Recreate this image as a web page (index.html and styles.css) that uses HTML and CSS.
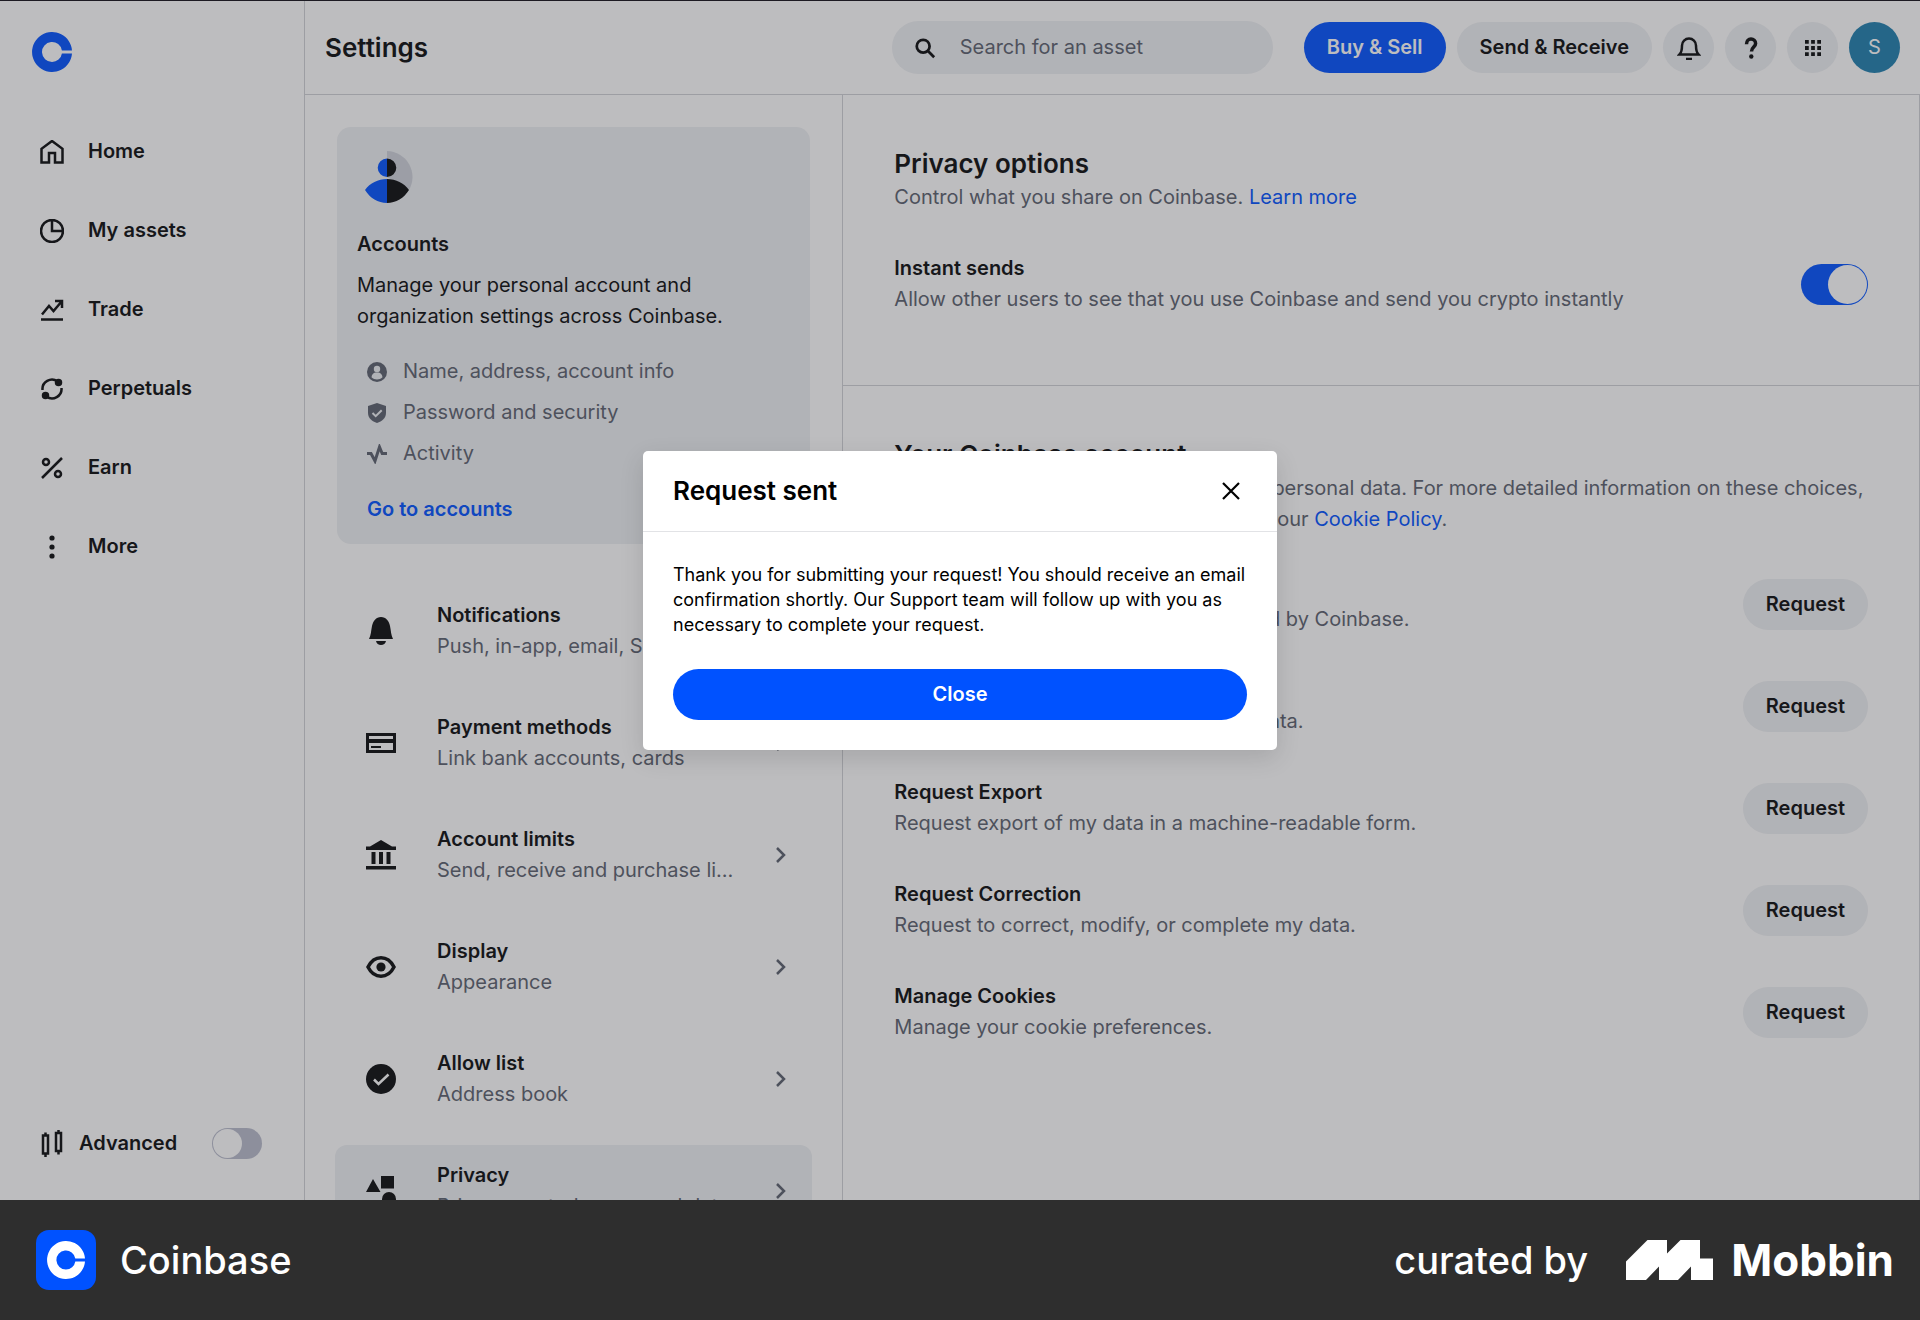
FILE: index.html
```html
<!DOCTYPE html>
<html lang="en">
<head>
<meta charset="utf-8">
<title>Settings</title>
<link rel="stylesheet" href="styles.css">
</head>
<body>
<div class="app">
  <nav class="sidebar" aria-label="Main">
    <a class="logo" href="#" aria-label="Coinbase"><svg viewBox="0 0 40 40" width="40" height="40"><path fill="#0052ff" d="M20 30a10 10 0 1 1 9.900-11.500H40A20 20 0 1 0 40 21.500H29.900A10 10 0 0 1 20 30z"/></svg></a>
    <ul class="nav">
      <li><a href="#"><svg class="ico" viewBox="0 0 24 24"><path d="M1.500 22.500V8.800L12 1l10.500 7.800v13.700H15V13H9v9.500z"/></svg>Home</a></li>
      <li><a href="#"><svg class="ico" viewBox="0 0 24 24"><circle cx="12" cy="12" r="11"/><path d="M12 1v11h11"/></svg>My assets</a></li>
      <li><a href="#"><svg class="ico" viewBox="0 0 24 24"><path d="M1 21.500h22M2 16.500l7-8.500 4.500 5L22 3M15 3h7v7"/></svg>Trade</a></li>
      <li><a href="#"><svg class="ico" viewBox="0 0 24 24"><path d="M2.500 13a9.500 9.500 0 0 1 15-8.600M21.500 11a9.500 9.500 0 0 1-15 8.600"/><circle cx="18.500" cy="5.500" r="2.500" fill="currentColor"/><circle cx="5.500" cy="18.500" r="2.500" fill="currentColor"/></svg>Perpetuals</a></li>
      <li><a href="#"><svg class="ico" viewBox="0 0 24 24"><circle cx="6" cy="6" r="3"/><circle cx="18" cy="18" r="3"/><path d="M22 2 2 22"/></svg>Earn</a></li>
      <li><a href="#"><svg class="ico" viewBox="0 0 24 24"><g fill="currentColor" stroke="none"><circle cx="12" cy="3" r="2.600"/><circle cx="12" cy="12" r="2.600"/><circle cx="12" cy="21" r="2.600"/></g></svg>More</a></li>
    </ul>
    <label class="advanced"><svg class="ico candles" viewBox="0 0 24 28"><path d="M3 5.500h5v18H3zM5.500 2.500v3M5.500 23.500v3.500M16 3h5v18h-5zM18.500 0v3M18.500 21v3.500"/></svg>Advanced<input class="switch small" type="checkbox" role="switch"></label>
  </nav>
  <div class="content">
    <header class="topbar">
      <h1>Settings</h1>
      <div class="actions">
        <label class="search"><svg viewBox="0 0 24 24" width="22" height="22" aria-hidden="true"><circle cx="10" cy="10" r="7"/><path d="m15 15 7 7"/></svg><input type="search" placeholder="Search for an asset" aria-label="Search for an asset"></label>
        <button class="pill primary">Buy &amp; Sell</button>
        <button class="pill">Send &amp; Receive</button>
        <button class="round" aria-label="Alerts"><svg class="ico" viewBox="0 0 24 24"><path d="M2.500 18.500c2-2 2.500-4 2.500-9a7 7 0 0 1 14 0c0 5 .500 7 2.500 9zM9 23h6"/></svg></button>
        <button class="round" aria-label="Help"><svg class="help" viewBox="0 0 24 24" width="24" height="24"><path d="M7.500 8.200C7.500 5 9.500 3 12 3s4.600 1.800 4.600 4.500c0 3.500-4.100 3.700-4.100 7.900"/><circle cx="12.300" cy="20.500" r="2.200"/></svg></button>
        <button class="round" aria-label="Apps"><svg viewBox="0 0 17 17" width="16" height="16" fill="currentColor"><path d="M0 0h4v4H0zM6.500 0h4v4h-4zM13 0h4v4h-4zM0 6.500h4v4H0zM6.500 6.500h4v4h-4zM13 6.500h4v4h-4zM0 13h4v4H0zM6.500 13h4v4h-4zM13 13h4v4h-4z"/></svg></button>
        <button class="round avatar">S</button>
      </div>
    </header>
    <main class="panes">
      <section class="menu">
        <article class="card">
          <svg class="person" viewBox="0 0 60 60" width="60" height="60"><path d="M30 4a26 26 0 0 1 22 39L30 30z" fill="#ced2db"/><path d="M30 11.500a9.300 9.300 0 0 0 0 18.600zM30 32C21 32 13 36 8 43c5 8 13 13 22 13z" fill="#0052ff"/><path d="M30 11.500a9.300 9.300 0 0 1 0 18.600zM30 32c9 0 17 4 22 11-5 8-13 13-22 13z" fill="#0a0b0d"/></svg>
          <h2>Accounts</h2>
          <p>Manage your personal account and organization settings across Coinbase.</p>
          <ul>
            <li><svg viewBox="0 0 20 20" width="20" height="20"><circle cx="10" cy="10" r="10"/><g class="cut"><circle cx="10" cy="7" r="3.200"/><path d="M4.500 15.300c.300-3 2-4.500 3.800-4.800h3.400c1.800.300 3.500 1.800 3.800 4.800-3 3-8 3-11 0z"/></g></svg>Name, address, account info</li>
            <li><svg viewBox="0 0 20 20" width="20" height="20"><path d="M10 0l9 3v7c0 5-4 8.500-9 10-5-1.500-9-5-9-10V3z"/><path class="tick" d="m5.500 10 3.200 3.200 6-6"/></svg>Password and security</li>
            <li><svg viewBox="0 0 20 20" width="20" height="20"><path class="pulse" d="M0 9.500h4L8 17l4.500-14 2.700 6.500H20"/></svg>Activity</li>
          </ul>
          <a class="strong" href="#">Go to accounts</a>
        </article>
        <ul class="rows">
          <li><a href="#"><svg class="glyph" viewBox="0 0 30 30"><path d="M3 23c2-4 2-8 3-13 1-5 4-9 9-9s8 4 9 9c1 5 1 9 3 13zM10 25h10c-.500 2.500-2.500 4-5 4s-4.500-1.500-5-4z"/></svg><span><b>Notifications</b><small>Push, in-app, email, SMS</small></span><svg class="chev" viewBox="0 0 10 16"><path d="m1 1 7 7-7 7"/></svg></a></li>
          <li><a href="#"><svg class="glyph" viewBox="0 0 30 30"><path fill-rule="evenodd" d="M0 5h30v20H0zM3 8v3h24V8zM3 15v7h24v-7zM5 18h10v2H5z"/></svg><span><b>Payment methods</b><small>Link bank accounts, cards</small></span><svg class="chev" viewBox="0 0 10 16"><path d="m1 1 7 7-7 7"/></svg></a></li>
          <li><a href="#"><svg class="glyph" viewBox="0 0 30 30"><path d="M15 0l11 6.500h4V10H0V6.500h4zM5.500 12h4v12h-4zM13 12h4v12h-4zM20.500 12h4v12h-4zM0 26h30v3.500H0z"/></svg><span><b>Account limits</b><small>Send, receive and purchase limits</small></span><svg class="chev" viewBox="0 0 10 16"><path d="m1 1 7 7-7 7"/></svg></a></li>
          <li><a href="#"><svg class="glyph" viewBox="0 0 30 30"><path d="M2 15c3-6 8-9.300 13-9.300S25 9 28 15c-3 6-8 9.300-13 9.300S5 21 2 15z" fill="none" stroke="currentColor" stroke-width="3.500"/><circle cx="15" cy="15" r="4.600"/></svg><span><b>Display</b><small>Appearance</small></span><svg class="chev" viewBox="0 0 10 16"><path d="m1 1 7 7-7 7"/></svg></a></li>
          <li><a href="#"><svg class="glyph" viewBox="0 0 30 30"><circle cx="15" cy="15" r="15"/><path d="m8 15.500 4.500 4.500 10-9.500" fill="none" stroke="#fff" stroke-width="2.500"/></svg><span><b>Allow list</b><small>Address book</small></span><svg class="chev" viewBox="0 0 10 16"><path d="m1 1 7 7-7 7"/></svg></a></li>
          <li><a class="current" href="#"><svg class="glyph" viewBox="0 0 30 30"><path d="M7 3l7.500 13H0zM15 0h13v12.500H15z"/><circle cx="23" cy="23" r="7"/></svg><span><b>Privacy</b><small>Privacy controls, personal data</small></span><svg class="chev" viewBox="0 0 10 16"><path d="m1 1 7 7-7 7"/></svg></a></li>
        </ul>
      </section>
      <section class="detail">
        <div class="block first">
          <h2>Privacy options</h2>
          <p>Control what you share on Coinbase. <a href="#">Learn more</a></p>
          <label class="setting"><span><b>Instant sends</b><small>Allow other users to see that you use Coinbase and send you crypto instantly</small></span><input class="switch" type="checkbox" role="switch" checked></label>
        </div>
        <div class="block">
          <h2>Your Coinbase account</h2>
          <p>You can make choices concerning your personal data. For more detailed information on these choices, please check out our <a href="#">Privacy Policy</a> and our <a href="#">Cookie Policy</a>.</p>
          <ul class="requests">
            <li><span><b>Request Data</b><small>Request a copy of my personal data held by Coinbase.</small></span><button class="pill">Request</button></li>
            <li><span><b>Request Deletion</b><small>Request deletion of all of my personal data.</small></span><button class="pill">Request</button></li>
            <li><span><b>Request Export</b><small>Request export of my data in a machine-readable form.</small></span><button class="pill">Request</button></li>
            <li><span><b>Request Correction</b><small>Request to correct, modify, or complete my data.</small></span><button class="pill">Request</button></li>
            <li><span><b>Manage Cookies</b><small>Manage your cookie preferences.</small></span><button class="pill">Request</button></li>
          </ul>
        </div>
      </section>
    </main>
  </div>
  <div class="overlay">
    <div class="modal" role="dialog" aria-modal="true" aria-labelledby="modal-title">
      <header>
        <h2 id="modal-title">Request sent</h2>
        <button class="dismiss" aria-label="Dismiss"><svg viewBox="0 0 18 18" width="18" height="18"><path d="m1 1 16 16M17 1 1 17"/></svg></button>
      </header>
      <div class="modal-body">
        <p>Thank you for submitting your request! You should receive an email confirmation shortly. Our Support team will follow up with you as necessary to complete your request.</p>
        <button class="pill primary">Close</button>
      </div>
    </div>
  </div>
</div>
<footer class="credit">
  <svg viewBox="0 0 60 60" width="60" height="60"><rect width="60" height="60" rx="13" fill="#0052ff"/><path fill="#fff" d="M30 39.500a9.500 9.500 0 1 1 9.300-11H49A19 19 0 1 0 49 31.500H39.300A9.500 9.500 0 0 1 30 39.500z"/></svg>
  <span class="app-name">Coinbase</span>
  <span class="by">curated by</span>
  <svg viewBox="0 0 87 40" width="87" height="40" aria-hidden="true"><path fill="#fff" d="M0 40V21.500L21.500 0H41v13.500L54.500 0H74v18.500h13V40H65V26.500L52 40H33V26.500L20 40z"/></svg>
  <span class="mobbin">Mobbin</span>
</footer>
</body>
</html>
```

FILE: styles.css
```css
* { box-sizing: border-box; margin: 0; padding: 0; }
ul { list-style: none; }
a { color: #0052ff; text-decoration: none; }
button, input { font: inherit; color: inherit; border: 0; }
b { font-weight: 600; }
small { font-size: inherit; color: #5b616e; }
h1, h2 { font-size: 26px; line-height: 36px; font-weight: 600; }

body {
  display: grid;
  grid-template-rows: minmax(0, 1fr) auto;
  height: 100vh;
  background: #2e2e2e;
  color: #0a0b0d;
  font: 20px/31px Inter, "Liberation Sans", sans-serif;
}

.app {
  position: relative;
  display: grid;
  grid-template-columns: 305px minmax(0, 1fr);
  grid-template-rows: minmax(0, 1fr);
  overflow: hidden;
  border-top: 1px solid #1c1a22;
  background: #fff;
}

/* Sidebar */
.sidebar {
  display: flex;
  flex-direction: column;
  border-right: 1px solid #d0d2d6;
  padding: 31px 32px 26px;
}
.logo { height: 40px; }
.nav { margin-top: 40px; }
.nav a {
  display: flex;
  align-items: center;
  gap: 24px;
  height: 79px;
  padding-left: 8px;
  color: inherit;
  font-weight: 600;
}
.ico {
  width: 24px;
  height: 24px;
  fill: none;
  stroke: currentColor;
  stroke-width: 2.500;
}
.advanced {
  display: flex;
  align-items: center;
  gap: 15px;
  margin-top: auto;
  padding: 0 10px 0 8px;
  height: 61px;
  font-weight: 600;
}
.candles { height: 28px; }
.advanced .switch { margin-left: auto; }

.switch {
  appearance: none;
  flex: none;
  width: 67px;
  height: 41px;
  padding: 1px;
  border-radius: 21px;
  background: #b9bccc;
}
.switch::before {
  content: "";
  display: block;
  width: 39px;
  height: 39px;
  border-radius: 50%;
  background: #fff;
}
.switch:checked { background: #0052ff; }
.switch:checked::before { margin-left: auto; }
.switch.small { width: 50px; height: 31px; }
.switch.small::before { width: 29px; height: 29px; }

/* Top bar */
.content {
  display: grid;
  grid-template-rows: 94px minmax(0, 1fr);
}
.topbar {
  display: flex;
  align-items: center;
  justify-content: space-between;
  border-bottom: 1px solid #d0d2d6;
  padding: 0 20px;
}
.actions { display: flex; align-items: center; gap: 11px; }
.search {
  display: flex;
  align-items: center;
  gap: 24px;
  width: 381px;
  height: 53px;
  margin-right: 20px;
  padding: 0 22px;
  border-radius: 27px;
  background: #eef0f3;
}
.search svg { flex: none; fill: none; stroke: currentColor; stroke-width: 3; }
.search input { min-width: 0; flex: 1; background: none; outline: 0; }
.search input::placeholder { color: #5b616e; opacity: 1; }
.pill {
  flex: none;
  height: 51px;
  padding: 0 23px;
  border-radius: 26px;
  background: #eef0f3;
  font-weight: 600;
}
.primary { background: #0052ff; color: #fff; }
.round {
  display: grid;
  place-items: center;
  width: 51px;
  height: 51px;
  border-radius: 50%;
  background: #eef0f3;
}
.help { fill: none; stroke: currentColor; stroke-width: 3.500; }
.help circle { fill: currentColor; stroke: none; }
.avatar { background: #1f7faf; color: #fff; }

/* Settings menu */
.panes { display: grid; grid-template-columns: 1fr 2fr; }
.menu { border-right: 1px solid #d0d2d6; padding: 32px 30px; min-width: 0; }
.card {
  margin: 0 2px;
  padding: 20px 20px 19px;
  border-radius: 14px;
  background: #eef0f3;
}
.person { display: block; }
.card h2 { margin: 22px 0 10px; font-size: 20px; line-height: 31px; }
.card ul { margin: 19px 0 20px; padding-left: 10px; }
.card li { display: flex; align-items: center; gap: 16px; height: 41px; color: #5b616e; }
.card li svg { fill: currentColor; }
.card .cut { fill: #eef0f3; }
.card .tick { fill: none; stroke: #eef0f3; stroke-width: 2; }
.card .pulse { fill: none; stroke: currentColor; stroke-width: 3; }
.strong { margin-left: 10px; font-weight: 600; }

.rows { display: grid; gap: 20px; margin-top: 41px; }
.rows a {
  display: grid;
  grid-template-columns: 30px minmax(0, 1fr) 10px;
  align-items: center;
  height: 92px;
  padding: 0 26px 0 31px;
  border-radius: 12px;
  color: inherit;
}
.rows .current { background: #eef0f3; }
.rows span { padding: 0 38px 0 41px; }
.rows span > *, .setting span > *, .requests span > * { display: block; }
.rows small { overflow: hidden; white-space: nowrap; text-overflow: ellipsis; }
.glyph { width: 30px; height: 30px; fill: currentColor; }
.chev { width: 10px; height: 16px; fill: none; stroke: #5b616e; stroke-width: 2.500; }

/* Privacy detail */
.detail { border-right: 1px solid #d0d2d6; min-width: 0; }
.block { padding: 51px 51px; }
.block p { color: #5b616e; }
.first { border-bottom: 1px solid #d0d2d6; padding-bottom: 70px; }
.setting { display: flex; align-items: center; justify-content: space-between; margin-top: 40px; }
.requests { display: grid; gap: 40px; margin-top: 38px; }
.requests li { display: flex; align-items: center; justify-content: space-between; }

/* Dialog */
.overlay {
  position: absolute;
  inset: 0;
  display: grid;
  place-items: center;
  background: rgb(50 51 55 / 32%);
}
.modal {
  width: 634px;
  border-radius: 5px;
  background: #fff;
  color: #000;
  box-shadow: 0 8px 24px rgb(0 0 0 / 12%);
}
.modal header {
  display: flex;
  align-items: center;
  justify-content: space-between;
  height: 81px;
  padding: 0 30px;
  border-bottom: 1px solid #e2e3e6;
}
.dismiss { display: grid; place-items: center; width: 32px; height: 32px; background: none; }
.dismiss svg { stroke: currentColor; stroke-width: 2.200; }
.modal-body { padding: 30px; }
.modal-body p { font-size: 18px; line-height: 25px; }
.modal-body .pill { width: 100%; margin-top: 32px; }

/* Credit bar */
.credit {
  display: flex;
  align-items: center;
  height: 120px;
  padding: 0 26px 0 36px;
  color: #fff;
}
.app-name, .by { font-size: 38px; font-weight: 500; }
.app-name { margin-left: 24px; }
.by { margin: 0 38px 0 auto; }
.mobbin { margin-left: 18px; font-size: 44px; font-weight: 700; }
```
